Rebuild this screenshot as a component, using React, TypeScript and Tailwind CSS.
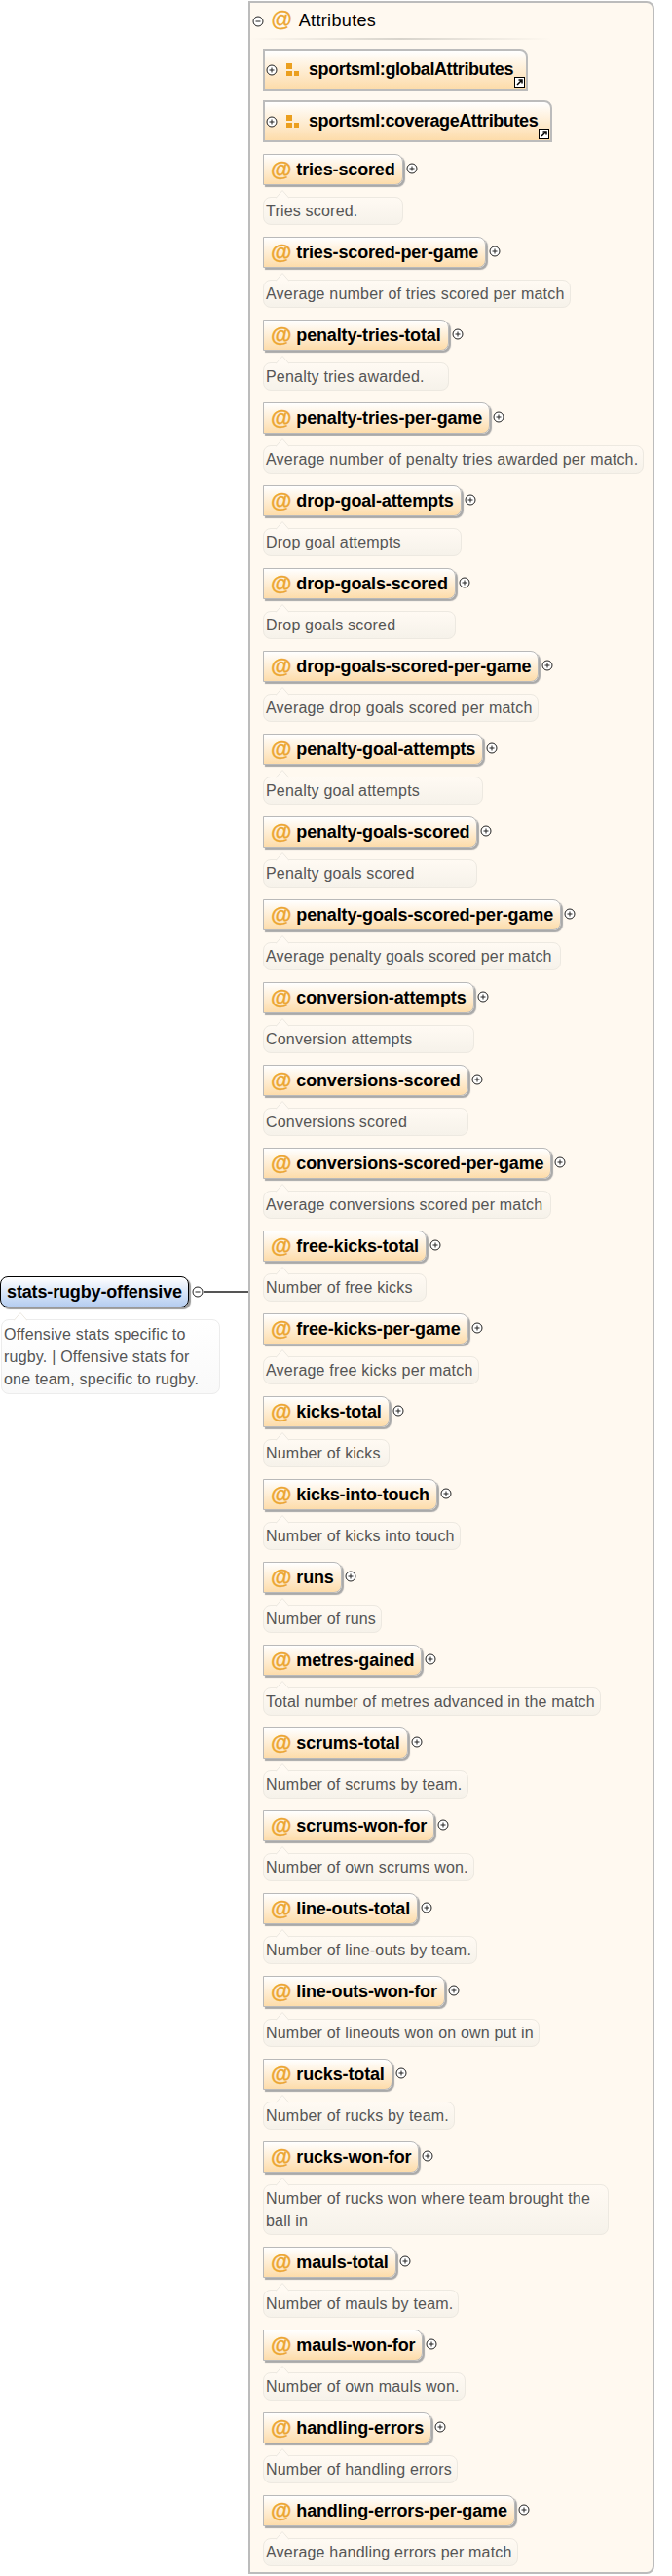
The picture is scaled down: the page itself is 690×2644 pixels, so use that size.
const rows: [string, string][] = [
  ['tries-scored', 'Tries scored.'],
  ['tries-scored-per-game', 'Average number of tries scored per match'],
  ['penalty-tries-total', 'Penalty tries awarded.'],
  ['penalty-tries-per-game', 'Average number of penalty tries awarded per match.'],
  ['drop-goal-attempts', 'Drop goal attempts'],
  ['drop-goals-scored', 'Drop goals scored'],
  ['drop-goals-scored-per-game', 'Average drop goals scored per match'],
  ['penalty-goal-attempts', 'Penalty goal attempts'],
  ['penalty-goals-scored', 'Penalty goals scored'],
  ['penalty-goals-scored-per-game', 'Average penalty goals scored per match'],
  ['conversion-attempts', 'Conversion attempts'],
  ['conversions-scored', 'Conversions scored'],
  ['conversions-scored-per-game', 'Average conversions scored per match'],
  ['free-kicks-total', 'Number of free kicks'],
  ['free-kicks-per-game', 'Average free kicks per match'],
  ['kicks-total', 'Number of kicks'],
  ['kicks-into-touch', 'Number of kicks into touch'],
  ['runs', 'Number of runs'],
  ['metres-gained', 'Total number of metres advanced in the match'],
  ['scrums-total', 'Number of scrums by team.'],
  ['scrums-won-for', 'Number of own scrums won.'],
  ['line-outs-total', 'Number of line-outs by team.'],
  ['line-outs-won-for', 'Number of lineouts won on own put in'],
  ['rucks-total', 'Number of rucks by team.'],
  ['rucks-won-for', 'Number of rucks won where team brought the\nball in'],
  ['mauls-total', 'Number of mauls by team.'],
  ['mauls-won-for', 'Number of own mauls won.'],
  ['handling-errors', 'Number of handling errors'],
  ['handling-errors-per-game', 'Average handling errors per match'],
]

function Toggle({ minus }: { minus?: boolean }) {
  return (
    <svg width="12" height="12" viewBox="0 0 12 12" className="shrink-0">
      <circle cx="6" cy="6" r="5" fill="#fff" stroke="#222" strokeWidth="1" />
      <path d={minus ? 'M3.5 6h5' : 'M3.5 6h5M6 3.5v5'} stroke="#222" strokeWidth="1" />
    </svg>
  )
}

function Notch({ fill }: { fill: string }) {
  return (
    <svg width="14" height="9" viewBox="0 0 14 9" className="absolute left-[12px] top-[-8px]">
      <path d="M0 8.5 L7 0.5 L14 8.5" fill={fill} stroke="#ece8e0" strokeWidth="1" />
    </svg>
  )
}

function Doc({ text }: { text: string }) {
  return (
    <div className="relative min-w-0 whitespace-pre rounded-[8px] border border-[#ede9e1] bg-gradient-to-b from-[#fffaf3] to-[#f6f2ea] py-[2px] pl-[2px] pr-[5px] text-[16px] leading-[23px] tracking-[0.2px] text-[#555]">
      <Notch fill="#fffaf3" />
      {text}
      {/* 两行说明的框宽度是固定的 */}
      {text.includes('\n') && <div className="w-[346px]" />}
    </div>
  )
}

function AtSign() {
  return <span className="text-[22px] leading-none text-[#eca632] [-webkit-text-stroke:0.3px_#eca632]">@</span>
}

function Attribute({ name, doc }: { name: string; doc: string }) {
  return (
    <div className="inline-grid gap-[12px] self-start">
      <div className="relative flex h-[32px] items-center gap-[5px] justify-self-start rounded-r-[8px] border border-[#b9b9b9] bg-gradient-to-b from-white to-[#fddcaa] px-[7px] text-[18px] font-bold tracking-[-0.15px] whitespace-nowrap text-black shadow-[2px_2px_1px_#a9a9a9]">
        <AtSign />
        {name}
        <span className="absolute left-full top-[8px] ml-[4px]">
          <Toggle />
        </span>
      </div>
      <Doc text={doc} />
    </div>
  )
}

function Group({ name }: { name: string }) {
  return (
    <div className="relative flex h-[43px] items-center self-start rounded-tr-[8px] border-2 border-[#bcbcbc] bg-gradient-to-b from-white to-[#fddcaa] pl-[1px] pr-[13px] text-[18px] font-bold tracking-[-0.4px] text-black">
      <Toggle />
      <svg width="13" height="13" viewBox="0 0 13 13" className="ml-[9px] mr-[10px] shrink-0">
        <rect x="0" y="0" width="6" height="6" fill="#eb9f1e" />
        <rect x="0" y="8" width="6" height="5" fill="#eb9f1e" />
        <rect x="8" y="8" width="5" height="5" fill="#eb9f1e" />
      </svg>
      {name}
      <svg width="11" height="11" viewBox="0 0 11 11" className="absolute bottom-[1px] right-[1px]">
        <rect x="0.5" y="0.5" width="10" height="10" fill="#fff" stroke="#000" />
        <path d="M3 8 L7 4 M4.5 3 H8 V6.5" stroke="#000" strokeWidth="1.5" fill="none" />
      </svg>
    </div>
  )
}

export default function App() {
  return (
    <div className="flex h-[2644px] w-[690px] items-start bg-white font-['Liberation_Sans',Arial,sans-serif]">
      <div className="mt-[1310px] w-[255px] shrink-0">
        <div className="flex items-center">
          <div className="flex h-[32px] w-[194px] items-center justify-center rounded-[8px] border-[1.5px] border-black bg-gradient-to-b from-white to-[#b5cdf0] text-[18px] font-bold tracking-[-0.15px] text-black shadow-[2px_2px_1px_#999]">
            stats-rugby-offensive
          </div>
          <span className="ml-[3px]">
            <Toggle minus />
          </span>
          <div className="h-[2px] flex-1 bg-[#555]" />
        </div>
        <div className="relative ml-[1px] mt-[12px] w-[225px] rounded-[8px] border border-[#ececec] bg-gradient-to-b from-white to-[#f9f9f9] py-[3px] pl-[2px] text-[16px] leading-[23px] tracking-[0.2px] text-[#555]">
          <Notch fill="#fff" />
          Offensive stats specific to
          <br />
          rugby. | Offensive stats for
          <br />
          one team, specific to rugby.
        </div>
      </div>

      <div className="mt-[1px] flex h-[2641px] w-[417px] flex-col rounded-r-[8px] border-2 border-[#bcbcbc] bg-[#fff9f0]">
        <div className="flex h-[36px] shrink-0 items-center pl-[2px] pt-[1px] text-[18px] tracking-[0.35px] text-black">
          <span className="mr-[7px]">
            <Toggle minus />
          </span>
          <span className="mr-[6px]">
            <AtSign />
          </span>
          Attributes
        </div>
        <div className="h-[2px] w-[310px] shrink-0 bg-gradient-to-r from-[#fff9f0] via-[#d8d4cc] to-[#fff9f0]" />
        <div className="flex flex-col gap-[12px] pl-[13px] pt-[9px]">
          <div className="flex flex-col gap-[10px]">
            <Group name="sportsml:globalAttributes" />
            <Group name="sportsml:coverageAttributes" />
          </div>
          {rows.map(([name, doc]) => (
            <Attribute key={name} name={name} doc={doc} />
          ))}
        </div>
      </div>
    </div>
  )
}
